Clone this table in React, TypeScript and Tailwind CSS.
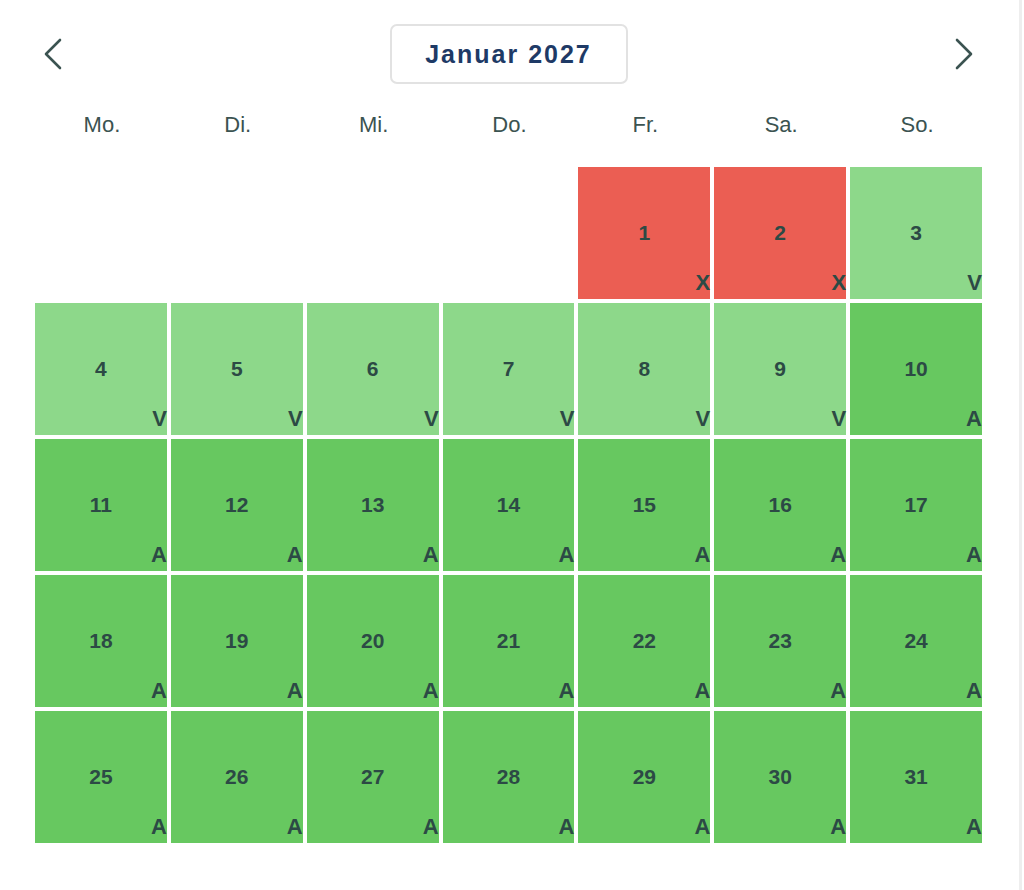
import React from "react";

type Status = "X" | "V" | "A";

const WEEKDAYS = ["Mo.", "Di.", "Mi.", "Do.", "Fr.", "Sa.", "So."];

const statusFor = (day: number): Status => {
  if (day <= 2) return "X";
  if (day <= 9) return "V";
  return "A";
};

const cellColor: Record<Status, string> = {
  X: "bg-[#eb5e53]",
  V: "bg-[#8dd88a]",
  A: "bg-[#67c860]",
};

const Chevron: React.FC<{ dir: "left" | "right" }> = ({ dir }) => (
  <svg width="20" height="32" viewBox="0 0 20 32" fill="none">
    <polyline
      points={dir === "left" ? "17,2 3,16 17,30" : "3,2 17,16 3,30"}
      stroke="#3b5351"
      strokeWidth="2.6"
      strokeLinecap="round"
      strokeLinejoin="round"
    />
  </svg>
);

const DayCell: React.FC<{ day: number }> = ({ day }) => {
  const status = statusFor(day);
  return (
    <div
      className={`relative flex h-[132px] items-center justify-center ${cellColor[status]}`}
    >
      <span className="text-[21px] font-bold text-[#2c4a45]">{day}</span>
      <span className="absolute right-0 bottom-[5px] text-[22px] leading-none font-bold text-[#2c4a45]">
        {status}
      </span>
    </div>
  );
};

const App: React.FC = () => {
  const blanks = 4;
  const days = Array.from({ length: 31 }, (_, i) => i + 1);

  return (
    <div
      className="h-[890px] w-[1022px] border-r-[3px] border-[#eeeeee] bg-white"
      style={{ fontFamily: '"Liberation Sans", Arial, sans-serif' }}
    >
      <div className="ml-[35px] w-[947px] pt-[24px]">
        <div className="flex h-[60px] items-center justify-between pr-[8px] pl-[8px]">
          <button className="flex items-center">
            <Chevron dir="left" />
          </button>
          <div className="flex h-[60px] w-[238px] items-center justify-center rounded-[7px] border-2 border-[#e2e2e2]">
            <span className="pt-[2px] text-[25px] font-bold tracking-[2px] text-[#1e3a66]">
              Januar 2027
            </span>
          </div>
          <button className="flex items-center">
            <Chevron dir="right" />
          </button>
        </div>

        <div className="mt-[28px] grid grid-cols-7 gap-[4px]">
          {WEEKDAYS.map((d) => (
            <div
              key={d}
              className="pl-[2px] text-center text-[22px] leading-[26px] text-[#3b5351]"
            >
              {d}
            </div>
          ))}
        </div>

        <div className="mt-[29px] grid grid-cols-7 gap-[4px]">
          {Array.from({ length: blanks }, (_, i) => (
            <div key={`b${i}`} />
          ))}
          {days.map((d) => (
            <DayCell key={d} day={d} />
          ))}
        </div>
      </div>
    </div>
  );
};

export default App;
